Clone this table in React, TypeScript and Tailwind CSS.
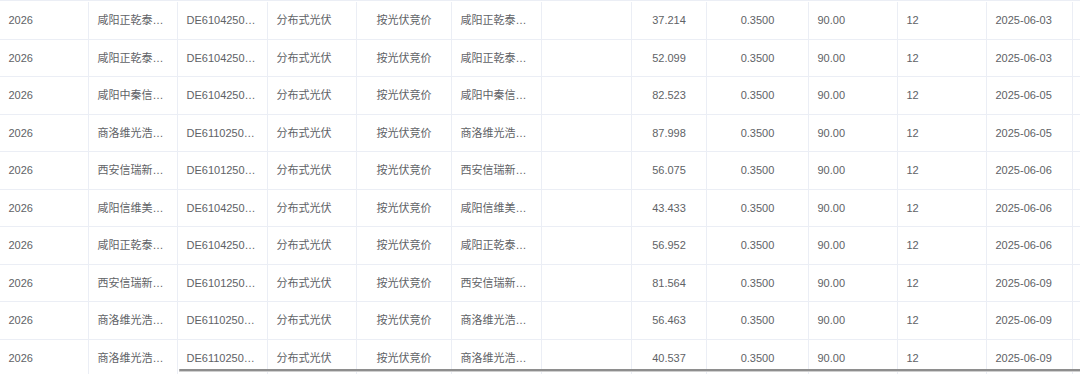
import React from "react";

type Row = {
  name: string;
  code: string;
  amount: string;
  date: string;
};

const rows: Row[] = [
  { name: "咸阳正乾泰…", code: "DE6104250…", amount: "37.214", date: "2025-06-03" },
  { name: "咸阳正乾泰…", code: "DE6104250…", amount: "52.099", date: "2025-06-03" },
  { name: "咸阳中秦信…", code: "DE6104250…", amount: "82.523", date: "2025-06-05" },
  { name: "商洛维光浩…", code: "DE6110250…", amount: "87.998", date: "2025-06-05" },
  { name: "西安信瑞新…", code: "DE6101250…", amount: "56.075", date: "2025-06-06" },
  { name: "咸阳信维美…", code: "DE6104250…", amount: "43.433", date: "2025-06-06" },
  { name: "咸阳正乾泰…", code: "DE6104250…", amount: "56.952", date: "2025-06-06" },
  { name: "西安信瑞新…", code: "DE6101250…", amount: "81.564", date: "2025-06-09" },
  { name: "商洛维光浩…", code: "DE6110250…", amount: "56.463", date: "2025-06-09" },
  { name: "商洛维光浩…", code: "DE6110250…", amount: "40.537", date: "2025-06-09" },
];

const cell = "h-full border-r border-[#ebeef5] px-[8.5px] flex items-center";
const txt = "block w-full whitespace-nowrap";

export default function App() {
  return (
    <div
      className="relative w-[1080px] h-[374px] overflow-hidden bg-white text-[11px] text-[#606266]"
      style={{ fontFamily: '"Liberation Sans", Arial, "Noto Sans CJK SC", sans-serif' }}
    >
      <div className="border-t border-[#ebeef5] pt-[1px]">
        {rows.map((r, i) => (
          <div
            key={i}
            className="grid grid-cols-[89px_89px_90px_89px_95px_90px_90px_75px_102px_89px_89px_86px_1fr] h-[37.5px] border-b border-[#ebeef5]"
          >
            <div className={cell}><span className={txt}>2026</span></div>
            <div className={cell}><span className={txt}>{r.name}</span></div>
            <div className={cell}><span className={txt}>{r.code}</span></div>
            <div className={cell}><span className={txt}>分布式光伏</span></div>
            <div className={cell}><span className={txt + " text-center"}>按光伏竞价</span></div>
            <div className={cell}><span className={txt}>{r.name}</span></div>
            <div className={cell}><span className={txt}></span></div>
            <div className={cell}><span className={txt + " text-center"}>{r.amount}</span></div>
            <div className={cell}><span className={txt + " text-center"}>0.3500</span></div>
            <div className={cell}><span className={txt}>90.00</span></div>
            <div className={cell}><span className={txt}>12</span></div>
            <div className={cell}><span className={txt}>{r.date}</span></div>
            <div className="h-full"></div>
          </div>
        ))}
      </div>
      <div className="absolute left-[179px] right-0 top-[369px]">
        <div className="h-[2px] bg-[#8e8e8e] rounded-l-[1px]"></div>
        <div className="h-[1px] bg-[#cfcfcf]"></div>
      </div>
    </div>
  );
}
